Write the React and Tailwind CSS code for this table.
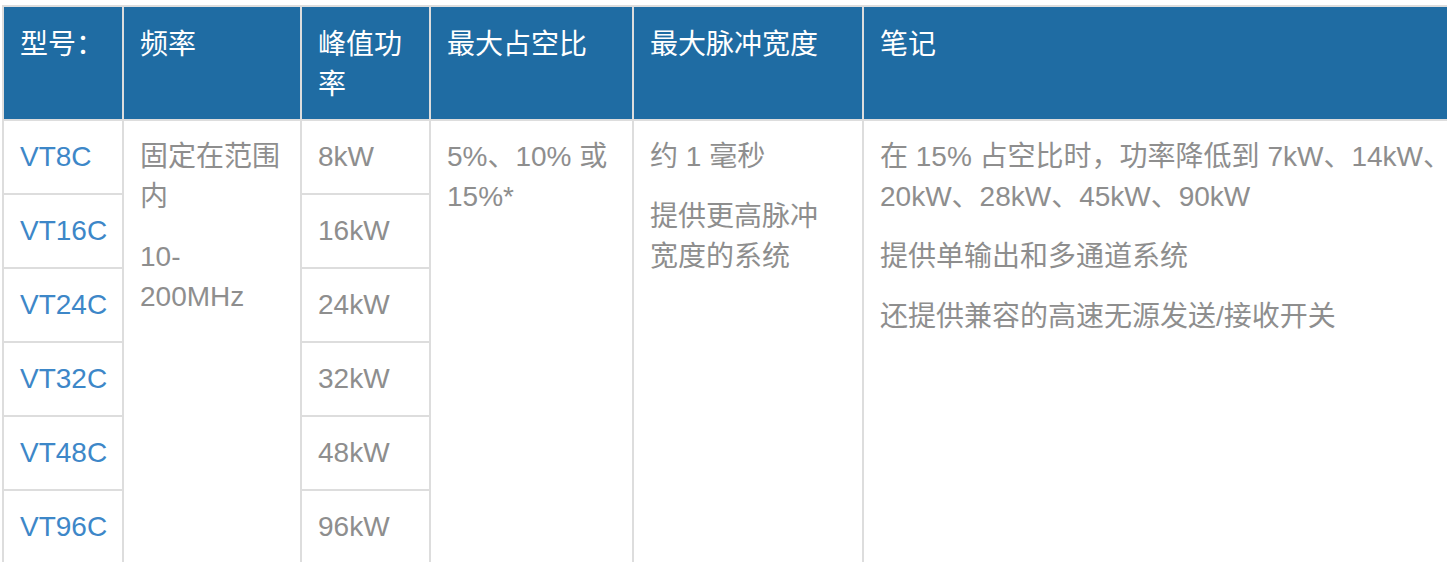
import React from "react"

const models = [
  { name: "VT8C", power: "8kW" },
  { name: "VT16C", power: "16kW" },
  { name: "VT24C", power: "24kW" },
  { name: "VT32C", power: "32kW" },
  { name: "VT48C", power: "48kW" },
  { name: "VT96C", power: "96kW" },
]

const headers = ["型号：", "频率", "峰值功率", "最大占空比", "最大脉冲宽度", "笔记"]

const Cell = ({ children, className = "" }) => (
  <div className={`bg-white pl-4 pr-[18px] py-4 ${className}`}>{children}</div>
)

export default function App() {
  return (
    <div className="h-screen w-full overflow-hidden bg-white pt-[5px] pl-[2px] font-['Liberation_Sans','Noto_Sans_CJK_SC',sans-serif] text-[28px] leading-[40px]">
      <div className="grid w-max grid-cols-[118px_176px_127px_201px_228px_640px] grid-rows-[112px_repeat(6,72px)] gap-[2px] bg-[#dddddd] p-[2px]">
        {headers.map((h) => (
          <div key={h} className="bg-[#1f6ca3] pl-4 pr-[18px] pt-[18px] pb-[14px] font-normal text-white">
            {h}
          </div>
        ))}

        {models.map((m, i) => (
          <React.Fragment key={m.name}>
            <Cell className="text-[#3d87c8]">{m.name}</Cell>
            {i === 0 && (
              <Cell className="row-span-6 flex flex-col gap-5 text-[#8e8e8e]">
                <p>固定在范围内</p>
                <p>10-200MHz</p>
              </Cell>
            )}
            <Cell className="text-[#8e8e8e]">{m.power}</Cell>
            {i === 0 && (
              <>
                <Cell className="row-span-6 text-[#8e8e8e]">
                  <p>5%、10% 或 15%*</p>
                </Cell>
                <Cell className="row-span-6 flex flex-col gap-5 text-[#8e8e8e]">
                  <p>约 1 毫秒</p>
                  <p>提供更高脉冲宽度的系统</p>
                </Cell>
                <Cell className="row-span-6 flex flex-col gap-5 text-[#8e8e8e]">
                  <p>在 15% 占空比时，功率降低到 7kW、14kW、20kW、28kW、45kW、90kW</p>
                  <p>提供单输出和多通道系统</p>
                  <p>还提供兼容的高速无源发送/接收开关</p>
                </Cell>
              </>
            )}
          </React.Fragment>
        ))}
      </div>
    </div>
  )
}
